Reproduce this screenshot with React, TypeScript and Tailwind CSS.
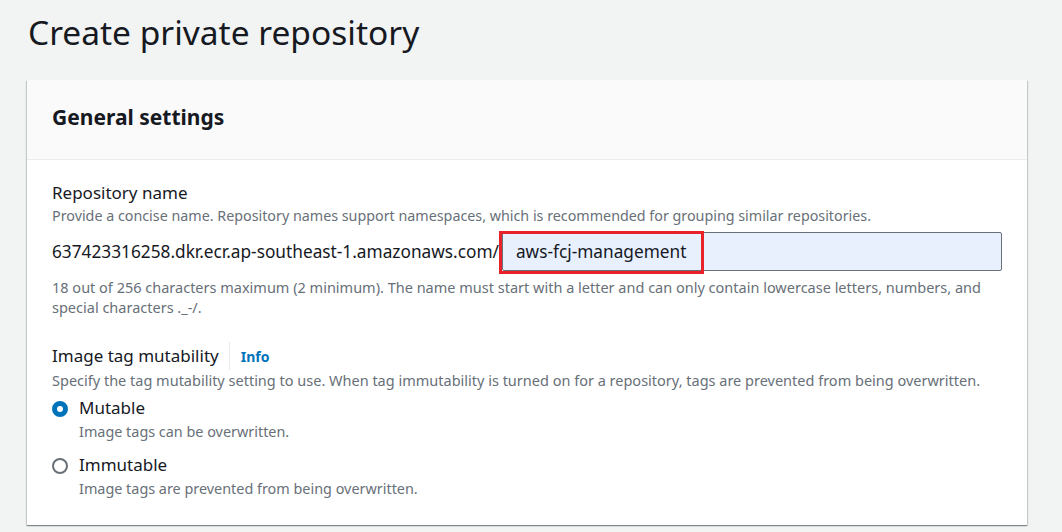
import React from "react";

function Radio({ checked, label, desc }: { checked: boolean; label: string; desc: string }) {
  return (
    <div className="flex gap-[11px]">
      <div className="pt-[4px]">
        {checked ? (
          <div className="w-[16px] h-[16px] rounded-full border-[5px] border-[#0073bb] bg-white" />
        ) : (
          <div className="w-[16px] h-[16px] rounded-full border-[2px] border-[#687078] bg-white" />
        )}
      </div>
      <div>
        <div className="text-[17px] leading-[22px] text-[#16191f]">{label}</div>
        <div className="text-[14.4px] leading-[20px] text-[#687078] mt-[3px]">{desc}</div>
      </div>
    </div>
  );
}

export default function App() {
  return (
    <div
      className="min-h-screen w-[1062px] h-[532px] overflow-hidden bg-[#f2f3f3] pl-[27px] pr-[35px]"
      style={{ fontFamily: '"Noto Sans", "Open Sans", sans-serif' }}
    >
      <h1 className="text-[33.5px] leading-[40px] text-[#16191f] pt-[12px] pl-[1px] font-normal">
        Create private repository
      </h1>

      <div className="mt-[28px] bg-white shadow-[0_1px_1px_0_rgba(0,28,36,0.3),1px_1px_1px_0_rgba(0,28,36,0.15),-1px_1px_1px_0_rgba(0,28,36,0.15)]">
        {/* Header */}
        <div className="bg-[#fafafa] border-b border-[#eaeded] h-[80px] flex items-center px-[25px] pb-[5px]">
          <h2 className="text-[21px] font-bold text-[#16191f] leading-[26px]">General settings</h2>
        </div>

        {/* Body */}
        <div className="px-[25px] pt-[22px] pb-[26px]">
          <div className="text-[17px] leading-[22px] text-[#16191f]">Repository name</div>
          <div className="text-[14.3px] leading-[20px] text-[#687078] mt-[2px]">
            Provide a concise name. Repository names support namespaces, which is recommended for grouping similar repositories.
          </div>

          <div className="flex items-center mt-[6px]">
            <span className="text-[17.25px] text-[#16191f] whitespace-nowrap">
              637423316258.dkr.ecr.ap-southeast-1.amazonaws.com/
            </span>
            <div className="relative flex-1 ml-[3px] h-[39px] bg-[#e8f0fe] border border-[#687078] rounded-[2px] flex items-center pl-[13px] text-[17.25px] text-[#16191f]">
              aws-fcj-management
              <div className="absolute left-[-4px] top-[-2px] w-[205px] h-[43px] border-[3px] border-[#e8212b]" />
            </div>
          </div>

          <div className="text-[14.5px] leading-[20px] text-[#687078] mt-[6px] pr-[20px]">
            18 out of 256 characters maximum (2 minimum). The name must start with a letter and can only contain lowercase letters, numbers, and special characters ._-/.
          </div>

          <div className="mt-[25px] flex items-center">
            <span className="text-[17px] leading-[22px] text-[#16191f]">Image tag mutability</span>
            <span className="ml-[10px] h-[28px] border-l border-[#eaeded]" />
            <span className="ml-[11px] text-[14px] font-bold text-[#0073bb]">Info</span>
          </div>
          <div className="text-[14.5px] leading-[20px] text-[#687078]">
            Specify the tag mutability setting to use. When tag immutability is turned on for a repository, tags are prevented from being overwritten.
          </div>

          <div className="mt-[7px] flex flex-col gap-[12px]">
            <Radio checked label="Mutable" desc="Image tags can be overwritten." />
            <Radio checked={false} label="Immutable" desc="Image tags are prevented from being overwritten." />
          </div>
        </div>
      </div>
    </div>
  );
}
